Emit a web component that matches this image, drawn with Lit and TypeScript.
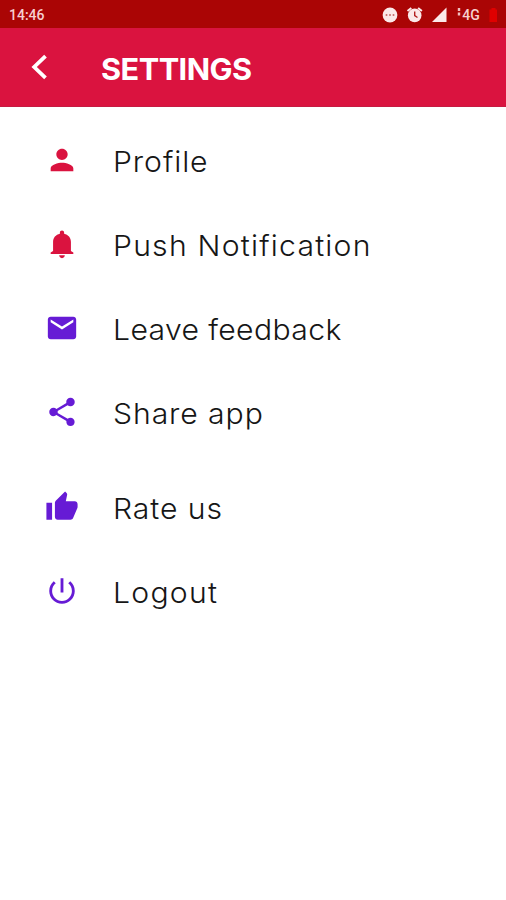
import { LitElement, html, css, svg } from "lit";
import { customElement } from "lit/decorators.js";
import { styleMap } from "lit/directives/style-map.js";

interface Item {
  label: string;
  path: string;
  tone: "red" | "violet";
  tracking: number;
  gap?: boolean;
}

const ITEMS: Item[] = [
  { label: "Profile", tone: "red", tracking: 0.88, path: "M12 12c2.21 0 4-1.79 4-4s-1.79-4-4-4-4 1.79-4 4 1.79 4 4 4zm0 2c-2.67 0-8 1.34-8 4v2h16v-2c0-2.66-5.33-4-8-4z" },
  { label: "Push Notification", tone: "red", tracking: 1.16, path: "M12 22c1.1 0 2-.9 2-2h-4c0 1.1.89 2 2 2zm6.3-5v-6.500c0-3.070-1.940-5.140-4.800-5.820V4c0-.83-.67-1.500-1.500-1.500s-1.500.67-1.500 1.500v.68C7.630 5.360 5.700 7.430 5.700 10.500v6.500L4 18v1h16v-1l-1.700-1z" },
  { label: "Leave feedback", tone: "violet", tracking: 0.35, path: "M20 4H4c-1.1 0-1.99.9-1.99 2L2 18c0 1.1.9 2 2 2h16c1.1 0 2-.9 2-2V6c0-1.1-.9-2-2-2zm0 4l-8 5-8-5V6l8 5 8-5v2z" },
  { label: "Share app", tone: "violet", tracking: 0.87, path: "M18 16.08c-.76 0-1.44.3-1.96.77L8.91 12.7c.05-.23.09-.46.09-.7s-.04-.47-.09-.7l7.05-4.11c.54.5 1.25.81 2.04.81 1.66 0 3-1.34 3-3s-1.34-3-3-3-3 1.34-3 3c0 .24.04.47.09.7L8.04 9.81C7.5 9.31 6.79 9 6 9c-1.66 0-3 1.34-3 3s1.34 3 3 3c.79 0 1.5-.31 2.04-.81l7.12 4.16c-.05.21-.08.43-.08.65 0 1.61 1.31 2.92 2.92 2.92 1.61 0 2.92-1.31 2.92-2.92s-1.31-2.92-2.92-2.92z" },
  { label: "Rate us", tone: "violet", tracking: 0.87, gap: true, path: "M1 21h4V9H1v12zm22-11c0-1.1-.9-2-2-2h-6.31l.95-4.57.03-.32c0-.41-.17-.79-.44-1.06L14.17 1 7.59 7.59C7.22 7.95 7 8.45 7 9v10c0 1.1.9 2 2 2h9c.83 0 1.54-.5 1.84-1.22l3.02-7.05c.09-.23.14-.47.14-.73v-2z" },
  { label: "Logout", tone: "violet", tracking: 1.2, path: "M13 3h-2v10h2V3zm4.83 2.17l-1.42 1.42C17.99 7.86 19 9.81 19 12c0 3.87-3.13 7-7 7s-7-3.13-7-7c0-2.19 1.01-4.14 2.58-5.42L6.17 5.17C4.23 6.82 3 9.26 3 12c0 4.97 4.03 9 9 9s9-4.03 9-9c0-2.74-1.23-5.18-3.17-6.83z" },
];

@customElement("app-root")
export class AppRoot extends LitElement {
  static styles = css`
    :host { display: block; height: 900px; background: #fff; font-family: Inter, "Open Sans", sans-serif; overflow: hidden; }
    .status { height: 28px; background: #aa0505; display: flex; align-items: center; justify-content: space-between; padding: 1px 9px 0 9px; box-sizing: border-box; color: #f6d0d0; font: 500 14px Roboto, sans-serif; }
    .tray { display: block; width: 118px; height: 22px; }
    .net { font: 500 14px Roboto, sans-serif; }
    .bar { height: 79px; box-sizing: border-box; background: #da133f; border-bottom: 1px solid #c51b42; display: flex; align-items: center; color: #fff; padding-left: 30px; }
    .back { width: 20px; height: 28px; margin-top: 0; }
    h1 { margin: 4px 0 0 51px; font-size: 29.5px; line-height: 36px; font-weight: 700; letter-spacing: -0.5px; white-space: nowrap; transform: scaleX(1.04); transform-origin: left; }
    .list { list-style: none; margin: 0; padding: 11px 0 0 45px; }
    .row { display: flex; align-items: center; height: 84px; }
    .row.gap { margin-top: 11px; }
    .icon { width: 34px; height: 34px; flex: none; fill: currentColor; }
    .red { color: #da133f; }
    .violet { color: #661bd5; }
    .label { margin: 3px 0 0 33.5px; font-size: 29px; line-height: 36px; font-weight: 300; color: #161616; white-space: nowrap; transform: scaleX(1.04); transform-origin: left; }
  `;

  render() {
    return html`
      <div class="status">
        <span>14:46</span>
        <svg class="tray" viewBox="379 4 118 22">
          <circle cx="390" cy="15" r="7.4" fill="#fbe9e9" />
          ${[386.5, 390, 393.5].map((x) => svg`<circle cx=${x} cy="15" r="1" fill="#c46a6a" />`)}
          <circle cx="414.7" cy="15.4" r="6.8" fill="#fbe9e9" />
          <path d="M407.500 11l3.800-3M421.900 11l-3.800-3" stroke="#fbe9e9" stroke-width="2" />
          <path d="M414.700 11.500v4.200l2.800 1.800" fill="none" stroke="#b32020" stroke-width="1.4" />
          <path d="M432 22L446.500 7.500V22z" fill="#fbe9e9" />
          <path d="M459 8v3M459 12.500v3" stroke="#f0c0c0" stroke-width="2.400" />
          <text class="net" x="462.200" y="20" fill="#f6d0d0">4G</text>
          <path d="M489.500 9.500h2V8h4v1.500h2V22h-8z" fill="#e00000" />
        </svg>
      </div>
      <header class="bar">
        <svg class="back" viewBox="0 0 20 28"><path d="M15.500 3.200L4.200 14l11.300 10.800" fill="none" stroke="#fff" stroke-width="3.800" /></svg>
        <h1>SETTINGS</h1>
      </header>
      <ul class="list">
        ${ITEMS.map((i) => html`
          <li class="row ${i.gap ? "gap" : ""}">
            <svg class="icon ${i.tone}" viewBox="0 0 24 24"><path d=${i.path} /></svg>
            <span class="label" style=${styleMap({ letterSpacing: `${i.tracking}px` })}>${i.label}</span>
          </li>`)}
      </ul>
    `;
  }
}
